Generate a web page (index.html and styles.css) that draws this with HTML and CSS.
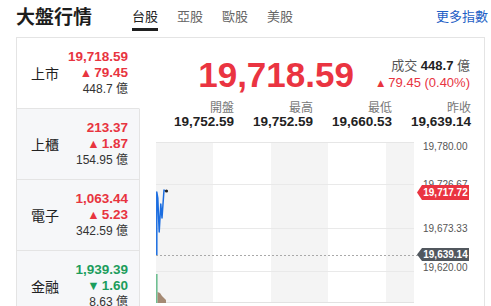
FILE: index.html
```html
<!DOCTYPE html>
<html lang="zh-Hant">
<head>
<meta charset="utf-8">
<title>大盤行情</title>
<link rel="stylesheet" href="styles.css">
</head>
<body>
<div class="page">
  <header class="head">
    <h1 class="title">大盤行情</h1>
    <nav class="tabs">
      <a class="tab active">台股</a>
      <a class="tab">亞股</a>
      <a class="tab">歐股</a>
      <a class="tab">美股</a>
    </nav>
    <a class="more">更多指數</a>
  </header>
  <div class="box">
    <aside class="side">
      <div class="row active">
        <span class="name">上市</span>
        <div class="vals">
          <div class="px up">19,718.59</div>
          <div class="chg up"><span class="tri">▲</span>79.45</div>
          <div class="vol">448.7 億</div>
        </div>
      </div>
      <div class="row">
        <span class="name">上櫃</span>
        <div class="vals">
          <div class="px up">213.37</div>
          <div class="chg up"><span class="tri">▲</span>1.87</div>
          <div class="vol">154.95 億</div>
        </div>
      </div>
      <div class="row">
        <span class="name">電子</span>
        <div class="vals">
          <div class="px up">1,063.44</div>
          <div class="chg up"><span class="tri">▲</span>5.23</div>
          <div class="vol">342.59 億</div>
        </div>
      </div>
      <div class="row">
        <span class="name">金融</span>
        <div class="vals">
          <div class="px down">1,939.39</div>
          <div class="chg down"><span class="tri">▼</span>1.60</div>
          <div class="vol">8.63 億</div>
        </div>
      </div>
    </aside>
    <main class="main">
      <div class="top">
        <div class="big">19,718.59</div>
        <div class="meta">
          <div class="turn">成交 <b>448.7</b> 億</div>
          <div class="delta"><span class="tri">▲</span>79.45 (0.40%)</div>
        </div>
      </div>
      <div class="stats">
        <div class="stat"><div class="lbl">開盤</div><div class="num">19,752.59</div></div>
        <div class="stat"><div class="lbl">最高</div><div class="num">19,752.59</div></div>
        <div class="stat"><div class="lbl">最低</div><div class="num">19,660.53</div></div>
        <div class="stat"><div class="lbl">昨收</div><div class="num">19,639.14</div></div>
      </div>
      <div class="chart">
        <svg width="315" height="166" viewBox="0 0 315 166" xmlns="http://www.w3.org/2000/svg">
          <rect x="0" y="0" width="258" height="161" fill="#ffffff"/>
          <rect x="0" y="0" width="57" height="161" fill="#f4f4f4"/>
          <rect x="115" y="0" width="57" height="161" fill="#f4f4f4"/>
          <rect x="230" y="0" width="28" height="161" fill="#f4f4f4"/>
          <line x1="0" y1="0.5" x2="258" y2="0.5" stroke="#e6e6e6"/>
          <line x1="0" y1="42.5" x2="258" y2="42.5" stroke="#e9e9e9"/>
          <line x1="0" y1="86.5" x2="258" y2="86.5" stroke="#e9e9e9"/>
          <line x1="0" y1="129.5" x2="258" y2="129.5" stroke="#e9e9e9"/>
          <line x1="0" y1="160.5" x2="258" y2="160.5" stroke="#e2e2e2"/>
          <line x1="0" y1="113.5" x2="262" y2="113.5" stroke="#a9a9a9" stroke-dasharray="2 2"/>
          <rect x="0" y="132" width="1.6" height="29" fill="#6fbf92"/>
          <polygon points="1.6,150 4,151 6,154 8,156 10,158 10,161 1.6,161" fill="#a58a74"/>
          <polyline points="0.8,113 0.8,50 1.8,56 3.2,90 4.8,62 6,76 8,48 9.5,49" fill="none" stroke="#1b6de0" stroke-width="1.5" stroke-linejoin="round"/>
          <circle cx="10.5" cy="49" r="1.6" fill="#222"/>
          <text class="ax" x="267" y="8">19,780.00</text>
          <text class="ax" x="267" y="46">19,726.67</text>
          <text class="ax" x="267" y="89.5">19,673.33</text>
          <text class="ax" x="267" y="129">19,620.00</text>
          <polygon points="261,50.5 266,43 313,43 313,58 266,58" fill="#ea3441"/>
          <text class="tag" x="289.5" y="54">19,717.72</text>
          <polygon points="261,112.5 266,106 313,106 313,119 266,119" fill="#51575e"/>
          <text class="tag" x="289.5" y="116.3">19,639.14</text>
        </svg>
      </div>
    </main>
  </div>
</div>
</body>
</html>
```
FILE: styles.css
```css
* { box-sizing: border-box; }
html, body { margin: 0; padding: 0; background: #fff; }
body {
  font-family: "Liberation Sans", "Noto Sans CJK TC", sans-serif;
  color: #222;
  width: 491px;
  height: 306px;
  overflow: hidden;
}
.page { padding-left: 16px; padding-right: 6px; }
.head {
  display: flex;
  align-items: flex-start;
  height: 37px;
}
.title {
  margin: 0;
  font-family: "Noto Sans CJK TC", sans-serif;
  font-size: 19px;
  font-weight: 700;
  line-height: 32px;
  color: #1d1d1d;
}
.tabs {
  display: flex;
  gap: 19px;
  margin-left: 40px;
}
.tab {
  font-family: "Noto Sans CJK TC", sans-serif;
  font-size: 13px;
  color: #666;
  height: 31px;
  padding-top: 4px;
  line-height: 24px;
  border-bottom: 3px solid transparent;
}
.tab.active { color: #222; border-bottom-color: #1f1f1f; }
.more {
  margin-left: auto;
  margin-right: -3px;
  font-family: "Noto Sans CJK TC", sans-serif;
  font-size: 13px;
  line-height: 32px;
  color: #1f5fc6;
}
.box {
  display: flex;
  border: 1px solid #e4e4e4;
  height: 300px;
}
.side { width: 123px; flex: none; }
.row {
  height: 71px;
  display: flex;
  align-items: center;
  justify-content: space-between;
  padding: 0 11px 1px 14px;
  background: #f6f7f9;
  border-bottom: 1px solid #e4e4e4;
  border-right: 1px solid #e4e4e4;
}
.row.active { background: #fff; border-right-color: transparent; }
.name {
  font-family: "Noto Sans CJK TC", sans-serif;
  font-size: 14px;
  color: #222;
}
.vals { text-align: right; line-height: 16px; }
.px, .chg { font-size: 13.5px; font-weight: 700; }
.vol { font-size: 12px; color: #333; }
.up { color: #e8343f; }
.down { color: #1c9d5c; }
.tri { font-size: 12.5px; margin-right: 2px; }
.main { flex: 1; min-width: 0; padding: 20px 14px 0 15px; }
.top { display: flex; justify-content: flex-end; align-items: flex-start; gap: 21px; }
.big {
  font-size: 35px;
  font-weight: 700;
  line-height: 34px;
  color: #ea3441;
}
.meta { text-align: right; font-size: 13px; line-height: 17px; margin-top: -1px; }
.turn { color: #555; }
.turn b { color: #222; }
.delta { color: #e8343f; }
.delta .tri { margin-right: 2px; font-size: 11.5px; }
.stats { display: grid; grid-template-columns: repeat(4, 79px); margin-top: 7px; }
.stat { text-align: right; }
.lbl {
  font-family: "Noto Sans CJK TC", sans-serif;
  font-size: 12px;
  line-height: 15px;
  color: #777;
}
.num { font-size: 13.5px; font-weight: 700; line-height: 16px; color: #222; }
.chart { margin-top: 12px; margin-left: 1px; }
.chart svg { display: block; }
.ax { font-family: "Liberation Sans", sans-serif; font-size: 10px; fill: #555; }
.tag { font-family: "Liberation Sans", sans-serif; font-size: 10px; font-weight: 700; fill: #fff; text-anchor: middle; }
```
